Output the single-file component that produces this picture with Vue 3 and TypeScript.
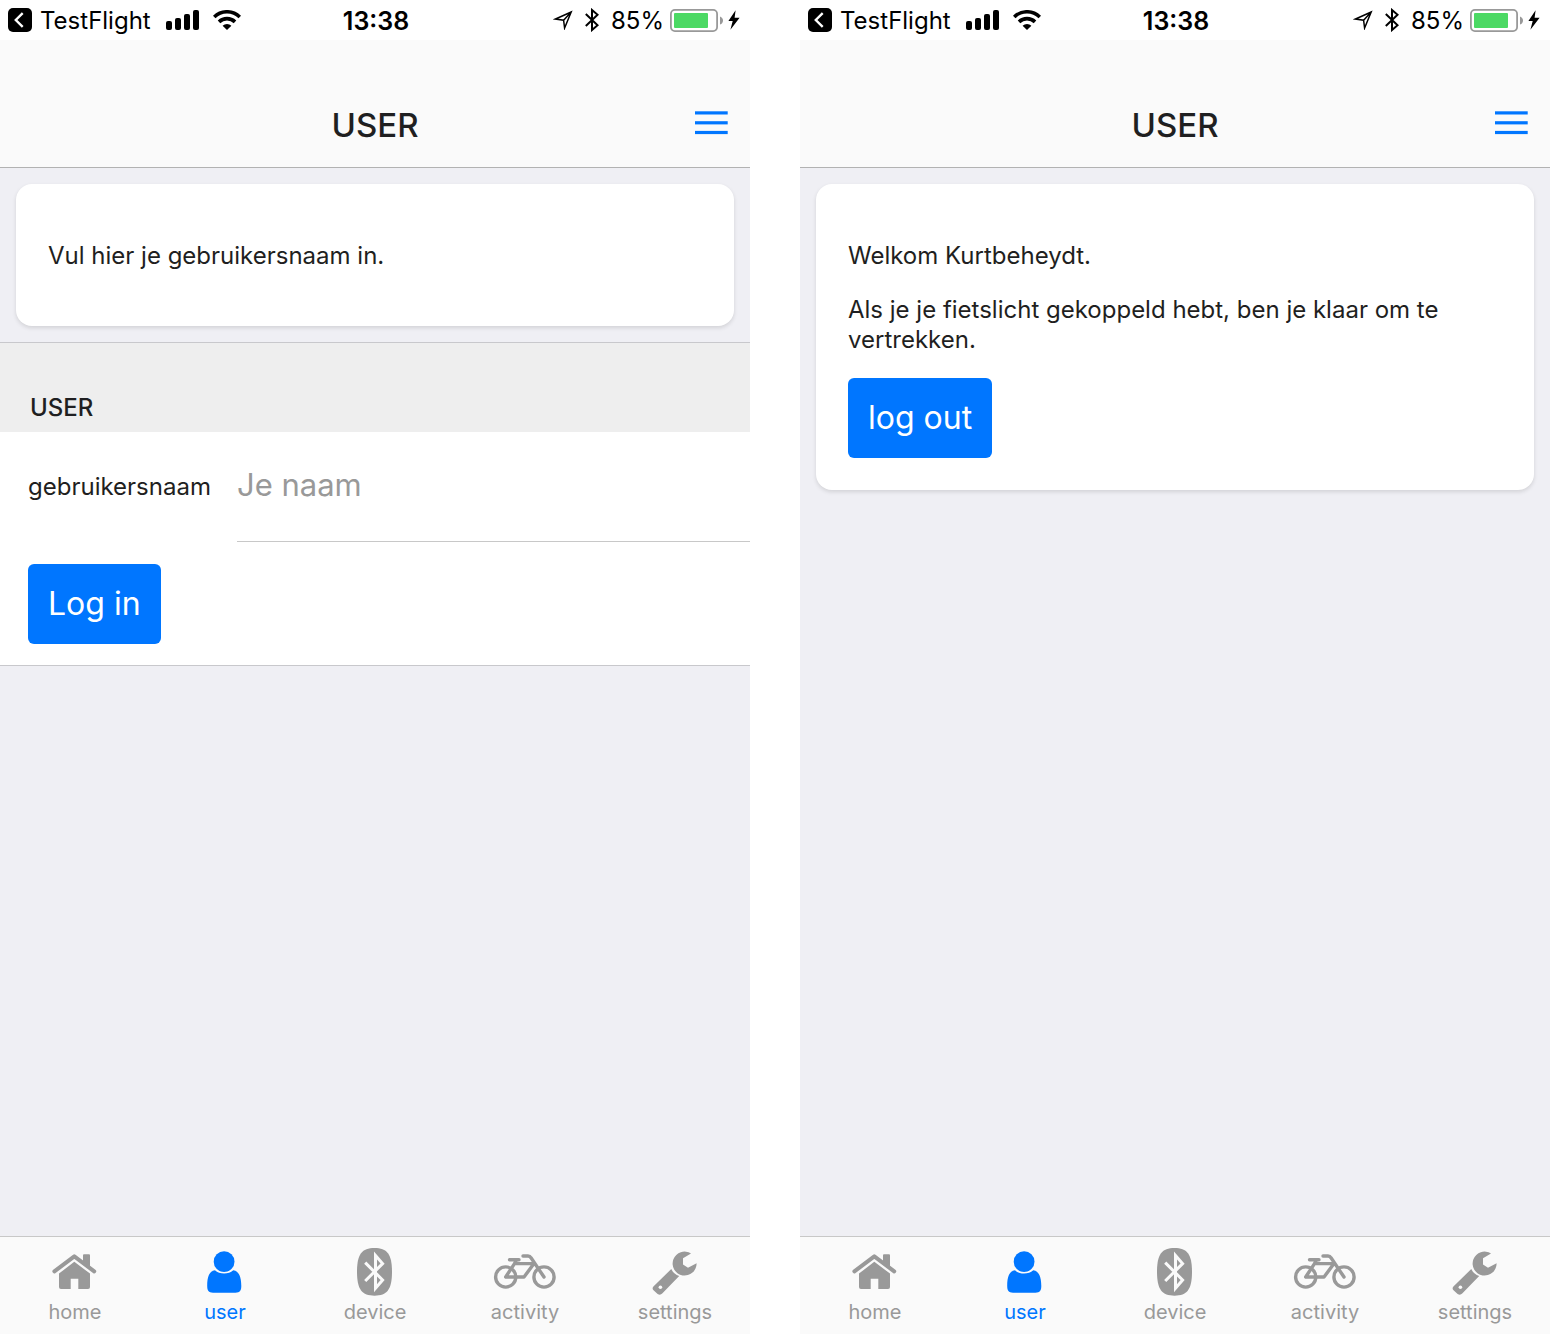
<script setup lang="ts">
import { ref } from 'vue'

type TabName = 'home' | 'user' | 'device' | 'activity' | 'settings'

interface Screen {
  id: string
  loggedIn: boolean
}

const tabs: TabName[] = ['home', 'user', 'device', 'activity', 'settings']
const screens: Screen[] = [
  { id: 'login', loggedIn: false },
  { id: 'welcome', loggedIn: true },
]
const username = ref('')
</script>

<template>
  <div class="screens">
    <section v-for="screen in screens" :key="screen.id" class="screen">
      <div class="status">
        <div class="status-side">
          <svg class="back" width="24" height="24" viewBox="0 0 24 24" aria-hidden="true">
            <rect width="24" height="24" rx="5" />
            <path d="M14.7 5.2 L7.8 12 L14.7 18.8" fill="none" stroke="#fff" stroke-width="2.4" />
          </svg>
          <span class="status-text">TestFlight</span>
          <svg class="signal" width="34" height="20" viewBox="0 0 34 20" aria-hidden="true">
            <rect x="0" y="11" width="6" height="9" rx="2" />
            <rect x="9" y="8" width="6" height="12" rx="2" />
            <rect x="18" y="4" width="6" height="16" rx="2" />
            <rect x="27" y="0" width="6" height="20" rx="2" />
          </svg>
          <svg width="28" height="20" viewBox="0 0 28 20" fill="none" stroke="#000" stroke-width="3.6" aria-hidden="true">
            <path d="M1.2 7 A18.3 18.3 0 0 1 26.8 7" />
            <path d="M6 11.9 A11.5 11.5 0 0 1 22 11.9" />
            <path d="M14 20 L9.6 15.8 A6.3 6.3 0 0 1 18.4 15.8 Z" fill="#000" stroke="none" />
          </svg>
        </div>
        <span class="status-text clock">13:38</span>
        <div class="status-side status-end">
          <svg width="20" height="20" viewBox="0 0 20 20" fill="none" stroke="#000" stroke-width="1.5" aria-hidden="true">
            <path d="M18.2 2 L2.5 9 L10.6 10.2 L11.6 18 Z M18 2.2 L10.6 10.2" />
          </svg>
          <svg class="bt" width="14" height="24" viewBox="0 0 14 24" fill="none" stroke="#000" stroke-width="2" aria-hidden="true">
            <path d="M0.8 6 L12.6 17.2 L7 22 V2 L12.6 6.8 L0.8 18" />
          </svg>
          <span class="status-text">85%</span>
          <svg class="battery" width="53" height="23" viewBox="0 0 53 23" aria-hidden="true">
            <rect x="0.9" y="0.9" width="46.2" height="21.2" rx="4" fill="#fff" stroke="#999" stroke-width="1.8" />
            <rect x="4" y="4" width="34" height="15" rx="1" fill="#4cd964" />
            <path d="M50 7.4 Q53 8.6 53 11.5 Q53 14.4 50 15.6 Z" fill="#999" />
          </svg>
          <svg width="12" height="20" viewBox="0 0 12 20" aria-hidden="true">
            <path d="M7.6 0.3 L0.4 11 H4.7 L2.4 19.7 L11.6 7.8 H6.6 Z" />
          </svg>
        </div>
      </div>

      <header class="toolbar">
        <h1>USER</h1>
        <button type="button" class="menu" aria-label="Menu">
          <svg width="33" height="28" viewBox="0 0 33 28" fill="#0076ff" aria-hidden="true">
            <rect y="0.3" width="32.7" height="3.2" />
            <rect y="10.2" width="32.7" height="3.2" />
            <rect y="19.9" width="32.7" height="3.2" />
          </svg>
        </button>
      </header>

      <main class="content">
        <div class="card">
          <template v-if="screen.loggedIn">
            <p>Welkom Kurtbeheydt.</p>
            <p>Als je je fietslicht gekoppeld hebt, ben je klaar om te vertrekken.</p>
            <button type="button" class="action">log out</button>
          </template>
          <p v-else>Vul hier je gebruikersnaam in.</p>
        </div>

        <form v-if="!screen.loggedIn" class="list" @submit.prevent>
          <h2>USER</h2>
          <div class="field">
            <label for="username">gebruikersnaam</label>
            <input id="username" v-model="username" type="text" placeholder="Je naam" />
          </div>
          <div class="submit">
            <button type="submit" class="action">Log in</button>
          </div>
        </form>
      </main>

      <nav class="tabs">
        <a v-for="tab in tabs" :key="tab" :href="'#' + tab" :class="['tab', { active: tab === 'user' }]">
          <svg width="64" height="50" viewBox="0 0 64 50" fill="currentColor" aria-hidden="true">
            <g v-if="tab === 'home'">
              <path d="M11.4 24.4 L31.3 9.4 L51.2 24.4" fill="none" stroke="currentColor" stroke-width="4" stroke-linecap="round" stroke-linejoin="round" />
              <path d="M40 15 V8.3 Q40 7.3 41 7.3 H46 Q47 7.3 47 8.3 V21 Z" />
              <path d="M31.3 14.7 L47 26.6 V40 Q47 42 45 42 H35.3 V31.7 H27.7 V42 H18 Q16 42 16 40 V26.6 Z" />
            </g>
            <g v-else-if="tab === 'user'">
              <circle cx="31.1" cy="14.7" r="10.4" />
              <path d="M22 23.3 C26.5 27.7 35.7 27.7 40.2 23.3 C46 24 48.3 30 48.3 39 C48.3 43.5 47 45.7 42.5 45.7 H20 C15.5 45.7 14.2 43.5 14.2 39 C14.2 30 16.2 24 22 23.3 Z" />
            </g>
            <g v-else-if="tab === 'device'">
              <path d="M31.5 1 C44 1 49 7 49 24.8 C49 42.6 44 48.7 31.5 48.7 C19 48.7 14 42.6 14 24.8 C14 7 19 1 31.5 1 Z" />
              <path d="M22.2 15.6 L39.6 33 L32.5 41.2 V8.4 L39.6 16.6 L22.2 34" fill="none" stroke="#fafafa" stroke-width="3" />
            </g>
            <g v-else-if="tab === 'activity'" fill="none" stroke="currentColor" stroke-width="3.4" stroke-linecap="round" stroke-linejoin="round">
              <circle cx="12.7" cy="30" r="10.1" />
              <circle cx="51" cy="30" r="10.1" />
              <path d="M12.7 30 H31 L41 16.6 H21.5 L12.7 30 M16.5 12.7 H26 M23.5 13 L21.5 16.6 M30 9 H35 Q37 9 38 10.8 L51 30" />
            </g>
            <g v-else>
              <path d="M48 6.4 A12 12 0 1 0 53.6 16.2 L45 20.8 L40 17.6 V11.2 Z" />
              <path d="M28.3 22 Q30.3 26.8 36.2 29 L19.2 46.6 Q17.2 48.6 14.6 47 L10.8 43.6 Q8.6 41.4 10.4 39.4 Z" />
              <circle cx="17.4" cy="40.3" r="1.8" fill="#fafafa" />
            </g>
          </svg>
          <span>{{ tab }}</span>
        </a>
      </nav>
    </section>
  </div>
</template>

<style>
body {
  margin: 0;
  background: #fff;
}
</style>

<style scoped>
.screens {
  display: flex;
  gap: 50px;
  min-height: 100vh;
  font-family: Inter, "Liberation Sans", sans-serif;
  font-size: 24px;
  line-height: 30px;
  color: #1f1f21;
}
.screen {
  flex: 1;
  min-width: 0;
  display: flex;
  flex-direction: column;
  background: #efeff4;
}
.status {
  display: grid;
  grid-template-columns: 1fr auto 1fr;
  align-items: center;
  height: 40px;
  padding: 0 10px 0 8px;
  background: #fff;
  color: #000;
}
.status-side {
  display: flex;
  align-items: center;
}
.status-text {
  padding-top: 2px;
}
.status-end {
  justify-content: flex-end;
}
.back {
  margin-right: 8px;
}
.signal {
  margin: 0 13px 0 15px;
}
.clock {
  padding-left: 4px;
  font-size: 25px;
  font-weight: 600;
}
.bt {
  margin: 0 12px;
}
.battery {
  margin: 0 5px 0 6px;
}
.toolbar {
  box-sizing: border-box;
  display: grid;
  grid-template-columns: 1fr auto 1fr;
  align-items: center;
  height: 128px;
  padding: 42px 22px 0;
  background: #fafafa;
  border-bottom: 1px solid #b2b2b2;
}
h1 {
  grid-column: 2;
  margin: 0;
  font-size: 33px;
  line-height: 40px;
  font-weight: 500;
}
button {
  border: 0;
  font-family: inherit;
  cursor: pointer;
}
.menu {
  justify-self: end;
  display: flex;
  padding: 0;
  background: none;
}
.content {
  flex: 1;
}
.card {
  display: flex;
  flex-direction: column;
  align-items: flex-start;
  margin: 16px;
  padding: 32px;
  border-radius: 16px;
  background: #fff;
  box-shadow: 0 2px 4px rgba(0, 0, 0, 0.12);
}
.card p {
  margin: 0 0 24px;
}
.card p:first-child {
  margin-top: 25px;
}
.card p:last-of-type {
  margin-bottom: 23px;
}
.action {
  height: 80px;
  padding: 0 20px;
  border-radius: 6px;
  background: #0076ff;
  color: #fff;
  font-size: 32px;
  line-height: 40px;
}
.list {
  background: #fff;
  border-top: 1px solid #c8c8cc;
  border-bottom: 1px solid #c8c8cc;
}
h2 {
  margin: 0;
  padding: 50px 30px 9px;
  background: #eee;
  font-size: 24px;
  line-height: 30px;
  font-weight: 500;
}
.field {
  display: flex;
  align-items: center;
  padding-left: 28px;
}
.field label {
  flex: none;
  width: 209px;
}
.field input {
  flex: 1;
  min-width: 0;
  box-sizing: border-box;
  height: 110px;
  padding: 0 0 5px;
  border: 0;
  border-bottom: 1px solid #c8c8c8;
  background: none;
  font-family: inherit;
  font-size: 31px;
  color: inherit;
}
.field input::placeholder {
  color: #999;
  opacity: 1;
}
.submit {
  display: flex;
  padding: 22px 28px 21px;
}
.tabs {
  display: flex;
  border-top: 1px solid #c8c8c8;
  background: #fafafa;
}
.tab {
  flex: 1;
  display: flex;
  flex-direction: column;
  align-items: center;
  padding: 10px 0 7px;
  color: #999;
  font-size: 20px;
  line-height: 30px;
  text-decoration: none;
}
.tab.active {
  color: #0076ff;
}
</style>
